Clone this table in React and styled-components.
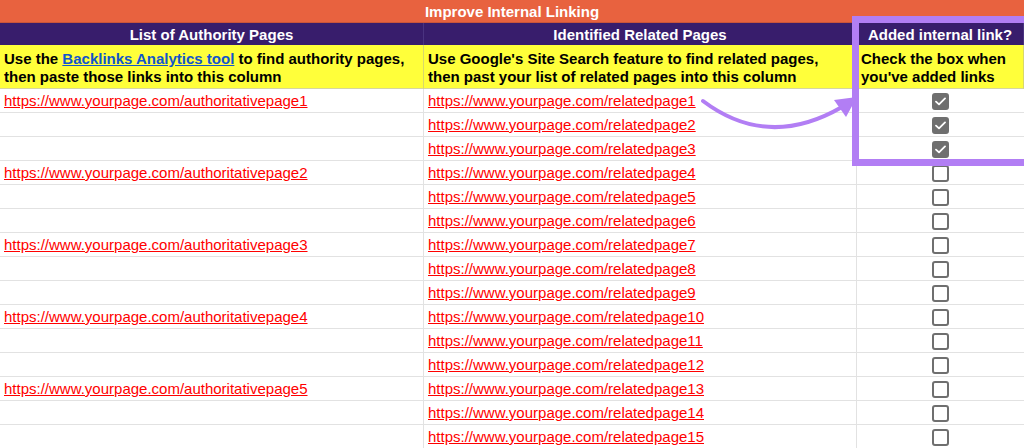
import React from "react";
import styled, { createGlobalStyle } from "styled-components";

const Global = createGlobalStyle`
  html, body { margin: 0; padding: 0; background: #fff; }
  body { font-family: "Liberation Sans", Arial, sans-serif; overflow: hidden; }
`;

const Page = styled.div`
  position: relative;
  width: 1024px;
  height: 448px;
  overflow: hidden;
  background: #fff;
`;

const TitleBar = styled.div`
  height: 22px;
  background: #e8623f;
  color: #fff;
  font-weight: 700;
  font-size: 15px;
  display: flex;
  align-items: center;
  justify-content: center;
  border-bottom: 1px solid #c9553a;
`;

const Grid = styled.div`
  display: grid;
  grid-template-columns: 424px 433px 167px;
`;

const HeadCell = styled.div`
  height: 22px;
  background: #381d6c;
  color: #fff;
  font-weight: 700;
  font-size: 15px;
  display: flex;
  align-items: center;
  justify-content: center;
  border-right: 1px solid #4a3380;
  box-sizing: border-box;
  &:last-child { border-right: none; }
`;

const NoteCell = styled.div`
  height: 44px;
  background: #ffff3a;
  color: #000;
  font-weight: 700;
  font-size: 15px;
  line-height: 18px;
  padding: 5px 4px 0 4px;
  box-sizing: border-box;
  white-space: nowrap;
  border-right: 1px solid #d8d86a;
  border-bottom: 1px solid #d6d6a0;
  &:last-child { border-right: none; }
`;

const ToolLink = styled.a`
  color: #1155cc;
  text-decoration: underline;
`;

const DataCell = styled.div`
  height: 24px;
  box-sizing: border-box;
  border-right: 1px solid #e2e2e2;
  border-bottom: 1px solid #e2e2e2;
  display: flex;
  align-items: flex-end;
  justify-content: ${(p) => (p.$center ? "center" : "flex-start")};
  padding: 0 4px 3px 4px;
  font-size: 15px;
  &:nth-child(3n) { border-right: none; }
`;

const CheckCell = styled(DataCell)`
  align-items: center;
  padding: 0;
`;

const UrlLink = styled.a`
  color: #ff0000;
  text-decoration: underline;
  line-height: 17px;
  white-space: nowrap;
`;

const Box = styled.span`
  width: 17px;
  height: 17px;
  box-sizing: border-box;
  border-radius: 3px;
  border: 2px solid #6f6f6f;
  background: ${(p) => (p.$checked ? "#6f6f6f" : "#fff")};
  display: flex;
  align-items: center;
  justify-content: center;
  margin-top: 1px;
`;

const Highlight = styled.div`
  position: absolute;
  left: 852px;
  top: 16px;
  width: 190px;
  height: 150px;
  box-sizing: border-box;
  border: 7px solid #b27ef4;
  pointer-events: none;
`;

const Arrow = styled.svg`
  position: absolute;
  left: 0;
  top: 0;
  pointer-events: none;
`;

const authority = {
  0: "https://www.yourpage.com/authoritativepage1",
  3: "https://www.yourpage.com/authoritativepage2",
  6: "https://www.yourpage.com/authoritativepage3",
  9: "https://www.yourpage.com/authoritativepage4",
  12: "https://www.yourpage.com/authoritativepage5",
};

const Check = () => (
  <svg width="11" height="9" viewBox="0 0 11 9">
    <path d="M1 4.6 L4 7.4 L10 1.4" fill="none" stroke="#fff" strokeWidth="1.8" strokeLinecap="round" strokeLinejoin="round" />
  </svg>
);

export default function App() {
  const rows = Array.from({ length: 15 }, (_, i) => i);
  return (
    <Page>
      <Global />
      <TitleBar>Improve Internal Linking</TitleBar>
      <Grid>
        <HeadCell>List of Authority Pages</HeadCell>
        <HeadCell>Identified Related Pages</HeadCell>
        <HeadCell>Added internal link?</HeadCell>
        <NoteCell>
          Use the <ToolLink href="#">Backlinks Analytics tool</ToolLink> to find authority pages,
          <br />
          then paste those links into this column
        </NoteCell>
        <NoteCell>
          Use Google's Site Search feature to find related pages,
          <br />
          then past your list of related pages into this column
        </NoteCell>
        <NoteCell>
          Check the box when
          <br />
          you've added links
        </NoteCell>
        {rows.map((i) => (
          <React.Fragment key={i}>
            <DataCell>
              {authority[i] && <UrlLink href="#">{authority[i]}</UrlLink>}
            </DataCell>
            <DataCell>
              <UrlLink href="#">{`https://www.yourpage.com/relatedpage${i + 1}`}</UrlLink>
            </DataCell>
            <CheckCell $center>
              <Box $checked={i < 3}>{i < 3 && <Check />}</Box>
            </CheckCell>
          </React.Fragment>
        ))}
      </Grid>
      <Highlight />
      <Arrow width="1024" height="448" viewBox="0 0 1024 448">
        <path d="M703 101 Q 768 150 842 107" fill="none" stroke="#b27ef4" strokeWidth="4" strokeLinecap="round" />
        <path d="M857 97 L 834 100 L 846 117 Z" fill="#b27ef4" />
      </Arrow>
    </Page>
  );
}
